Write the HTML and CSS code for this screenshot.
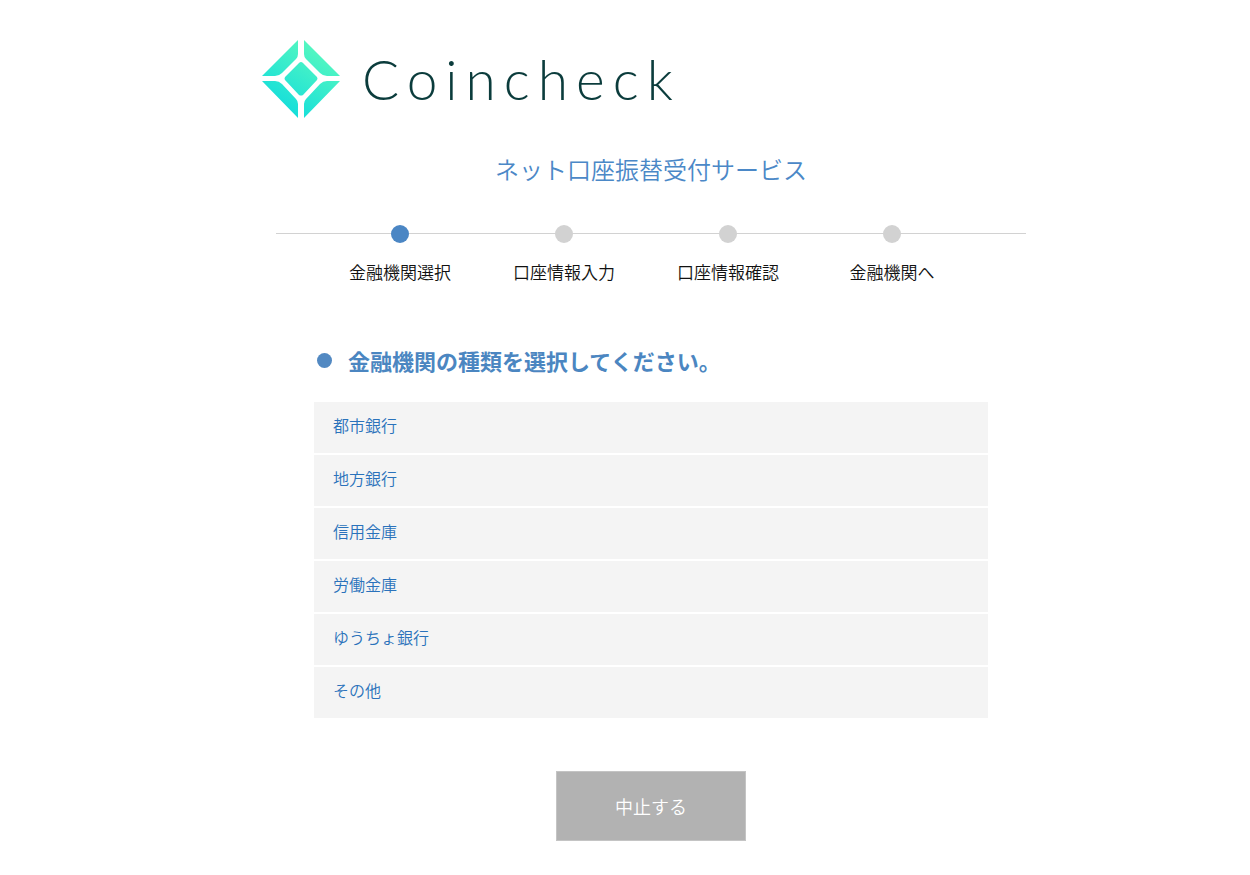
FILE: index.html
```html
<!DOCTYPE html>
<html lang="ja">
  <head>
    <meta charset="UTF-8" />
    <meta name="viewport" content="width=device-width, initial-scale=1.0" />
    <title>ネット口座振替受付サービス</title>
    <link rel="stylesheet" href="styles.css">
  </head>
  <body>
    <div class="wrapper">
      <header class="header">
        <a href="#" class="logo">
          <svg class="logo-mark" viewBox="0 0 80 80" aria-hidden="true">
            <defs>
              <linearGradient id="mark" gradientUnits="userSpaceOnUse" x1="20" y1="70" x2="60" y2="8">
                <stop offset="0" stop-color="#14dedb" />
                <stop offset="1" stop-color="#57f8bf" />
              </linearGradient>
            </defs>
            <g fill="url(#mark)">
              <path d="M37 1V15Q37 18 35 20L21 34Q18 37 14 37H1Z" />
              <path d="M43 1V15Q43 18 45 20L59 34Q62 37 66 37H79Z" />
              <path d="M1 42H14Q18 42 21 45L35 60Q37 62 37 65V79Z" />
              <path d="M79 42H66Q62 42 59 45L45 60Q43 62 43 65V79Z" />
              <path d="M38 24Q40 22 42 24L56 38Q57 40 56 41L42 56Q40 57 38 56L24 41Q23 40 24 38Z" />
            </g>
          </svg>
          <span class="logo-text">Coincheck</span>
        </a>
      </header>

      <h1 class="title">ネット口座振替受付サービス</h1>

      <ol class="steps">
        <li class="step active">金融機関選択</li>
        <li class="step">口座情報入力</li>
        <li class="step">口座情報確認</li>
        <li class="step">金融機関へ</li>
      </ol>

      <main class="contents">
        <h2 class="heading">金融機関の種類を選択してください。</h2>
        <ul class="bank-list">
          <li><a href="#">都市銀行</a></li>
          <li><a href="#">地方銀行</a></li>
          <li><a href="#">信用金庫</a></li>
          <li><a href="#">労働金庫</a></li>
          <li><a href="#">ゆうちょ銀行</a></li>
          <li><a href="#">その他</a></li>
        </ul>
        <button type="button" class="cancel">中止する</button>
      </main>
    </div>
  </body>
</html>
```
FILE: styles.css
```css
* {
  box-sizing: border-box;
}

body {
  margin: 0;
  padding-left: 52px;
  background-color: #fff;
  color: #111;
  font-family: "Noto Sans CJK JP", sans-serif;
  font-weight: 350;
}

a {
  text-decoration: none;
}

.wrapper {
  max-width: 750px;
  margin: 0 auto;
  padding: 39px 0 32px;
}

.header {
  margin-left: -15px;
}

.logo {
  display: inline-flex;
  align-items: center;
  gap: 21px;
  color: #0b3c3c;
}

.logo-mark {
  width: 80px;
  height: 80px;
}

.logo-text {
  font-family: Lato, sans-serif;
  font-size: 55px;
  font-weight: 300;
  line-height: 80px;
  letter-spacing: 8px;
}

.title {
  margin: 27px 0 0;
  color: #4b88c7;
  font-size: 24px;
  font-weight: 350;
  line-height: 36px;
  text-align: center;
}

.steps {
  display: grid;
  grid-template-columns: repeat(4, 1fr);
  margin: 38px 0 0;
  padding: 0 52px 0 42px;
  list-style: none;
  background: linear-gradient(#d2d2d2, #d2d2d2) 0 8px / 100% 1px no-repeat;
}

.step {
  font-size: 17px;
  line-height: 24px;
  text-align: center;
}

.step::before {
  content: "";
  display: block;
  width: 18px;
  height: 18px;
  margin: 0 auto 17px;
  border-radius: 50%;
  background-color: #d2d2d2;
}

.step.active::before {
  background-color: #4b86c4;
}

.contents {
  margin: 59px 38px 0;
}

.heading {
  display: flex;
  align-items: center;
  gap: 16px;
  margin: 0 0 25px 3px;
  color: #4b86c1;
  font-size: 22px;
  font-weight: 700;
  line-height: 34px;
}

.heading::before {
  content: "";
  width: 15px;
  height: 15px;
  border-radius: 50%;
  background-color: #5289c2;
}

.bank-list {
  display: grid;
  gap: 2px;
  margin: 0;
  padding: 0;
  list-style: none;
}

.bank-list a {
  display: block;
  padding: 11px 19px 16px;
  background-color: #f4f4f4;
  color: #2a72bb;
  font-size: 16px;
  line-height: 24px;
}

.cancel {
  display: block;
  width: 190px;
  margin: 53px auto 0;
  padding: 20px;
  border: 1px solid #c4c4c4;
  background-color: #b2b2b2;
  color: #fff;
  font-family: inherit;
  font-size: 18px;
  font-weight: 350;
  line-height: 28px;
  cursor: pointer;
}
```
